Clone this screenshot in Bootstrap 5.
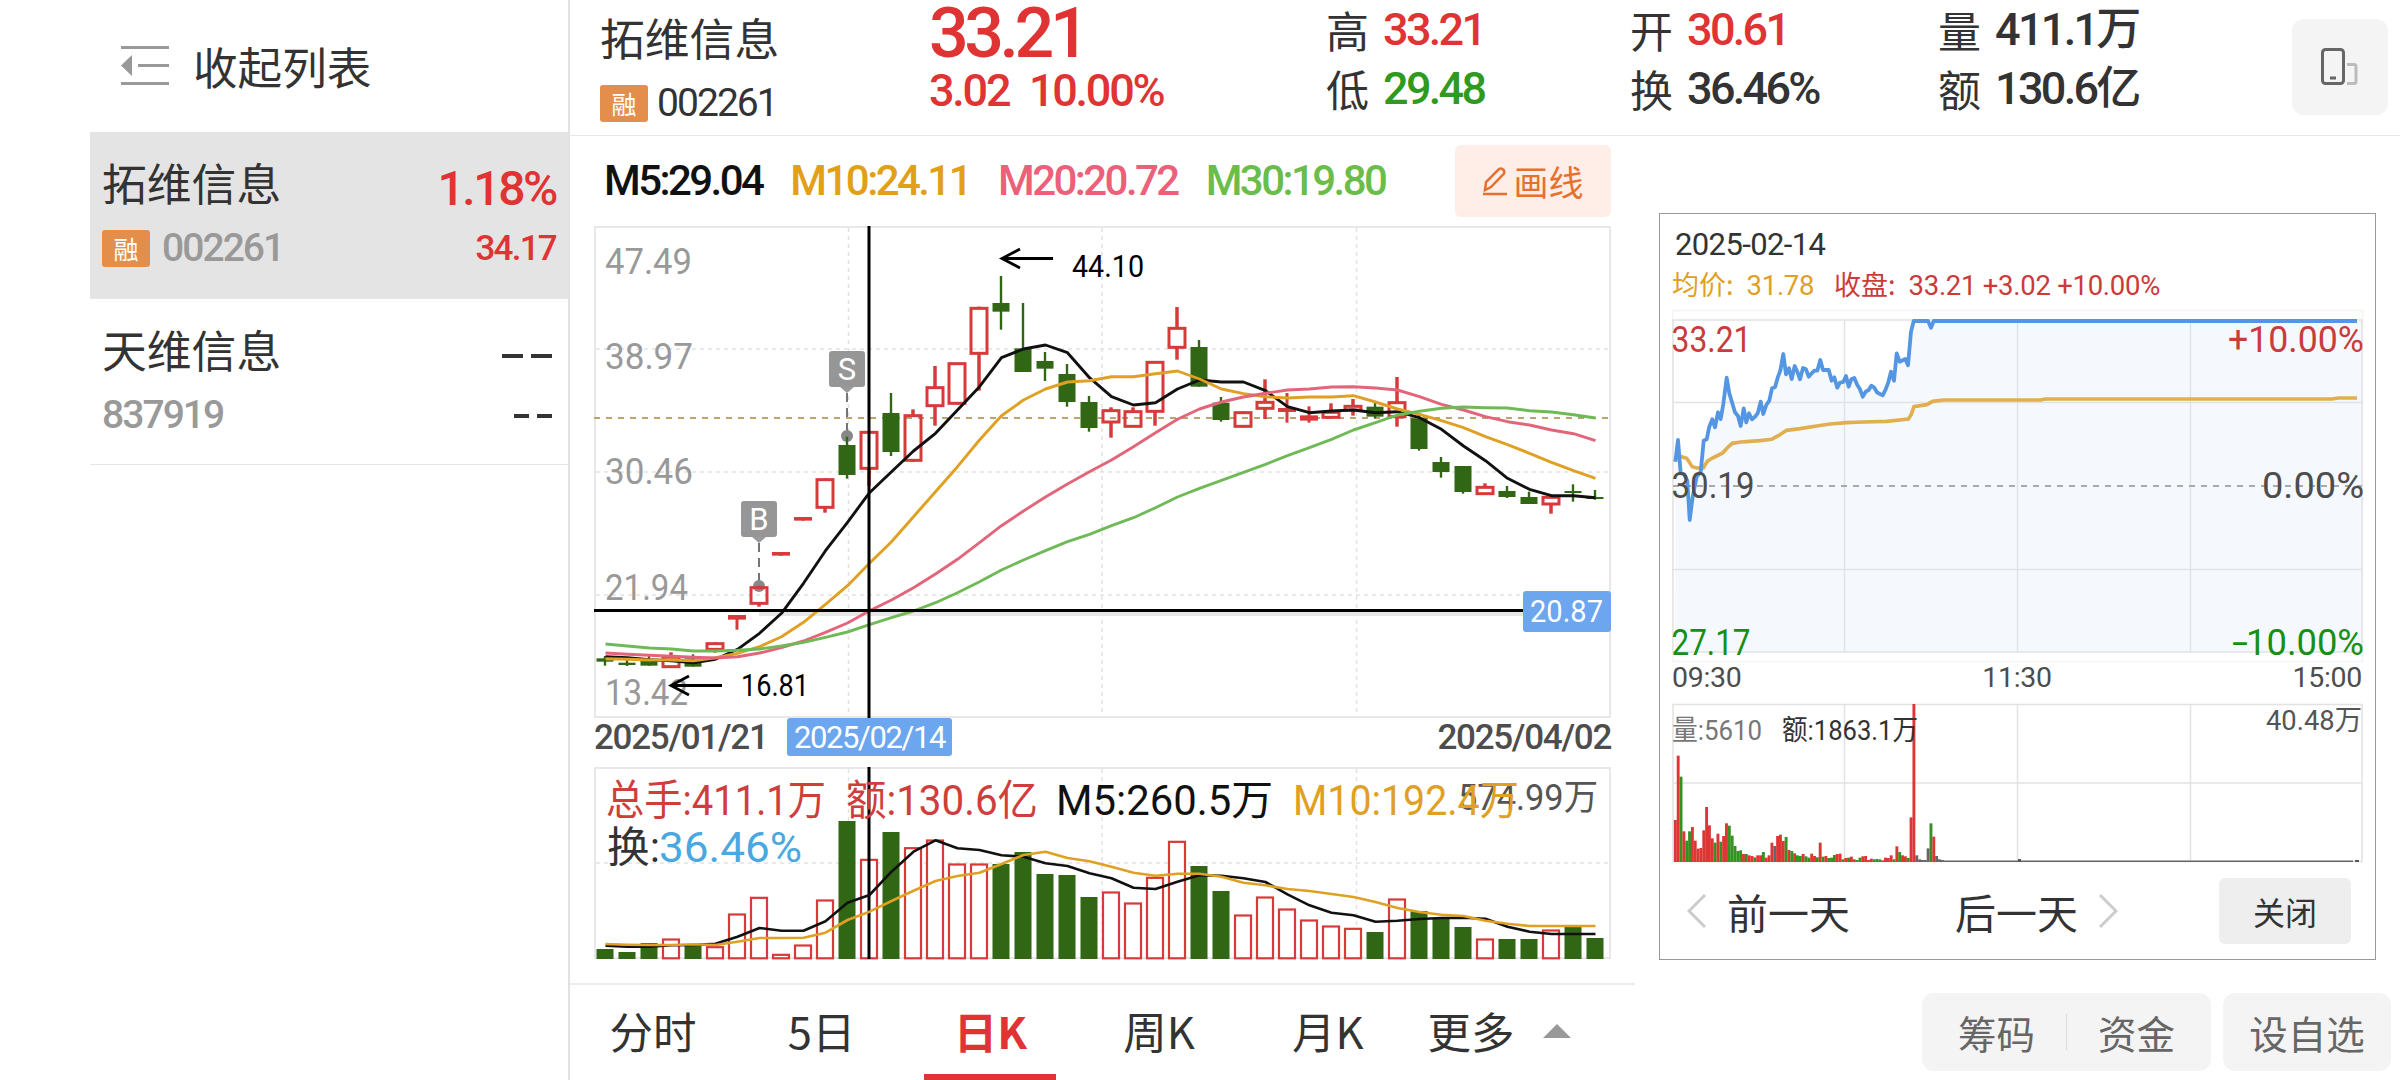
<!DOCTYPE html>
<html lang="zh-CN">
<head>
<meta charset="utf-8">
<meta name="viewport" content="width=device-width, initial-scale=1">
<title>拓维信息 002261</title>
<link href="https://cdn.jsdelivr.net/npm/bootstrap@5.3.0/dist/css/bootstrap.min.css" rel="stylesheet">
<script src="https://cdn.jsdelivr.net/npm/bootstrap@5.3.0/dist/js/bootstrap.bundle.min.js"></script>
<style>
  :root { --up:#e03333; --down:#2f9a1f; --ink:#333; --rule:#e6e6e6; }
  body { width:2400px; height:1080px; overflow:hidden; background:#fff; color:var(--ink);
         font-family:Roboto,"Noto Sans CJK SC",sans-serif; font-size:45px; line-height:1; }
  svg { display:block; flex-shrink:0; }
  .cjk { font-family:"Noto Sans CJK SC",sans-serif; }
  .din { font-weight:500; letter-spacing:-.05em; white-space:nowrap; }
  .up { color:var(--up); } .down { color:var(--down); } .dim { color:#999; }

  /* watch list */
  .watch { width:570px; padding-left:90px; border-right:2px solid #e2e2e2; }
  .watch-head { height:132px; padding-left:31px; gap:24px; }
  .watch-head .cjk { font-size:44.6px; }
  .stock { height:166px; padding:23px 12px 0 12px; border-bottom:1px solid var(--rule); }
  .stock.on { height:167px; background:#e4e4e4; }
  .stock-name { font-size:44.8px; line-height:54px; }
  .stock-code { font-size:39px; line-height:40px; margin-top:19px; gap:12px; }
  .stock-pct { font-size:48px; line-height:54px; padding-top:7px; }
  .stock-last { font-size:35px; line-height:40px; margin-top:13px; }
  .dash { display:block; background:#333; height:4px; }
  .rong { width:48px; height:37px; border-radius:3px; background:#e38f4b; color:#fff; font-size:25px; letter-spacing:0; line-height:36px; text-align:center; font-weight:400; }

  /* quote header */
  .quote { height:136px; border-bottom:1px solid #e8e8e8; padding-left:30px; }
  .quote .stock-code { gap:9px; }
  .q-name { width:329px; padding-top:10px; }
  .q-price { width:397px; padding-top:0; }
  .q-big { font-size:70px; line-height:66px; letter-spacing:-.064em; }
  .q-sub { font-size:45px; line-height:49px; word-spacing:.24em; }
  .q-stat { font-size:45px; letter-spacing:-.06em; }
  .q-row { display:flex; align-items:center; height:59px; line-height:59px; }
  .q-stat .cjk { font-size:43px; letter-spacing:0; font-weight:400; margin-right:14px; }
  .turn { width:96px; height:96px; margin:19px 12px 0 auto; background:#f4f4f4; border-radius:12px; }

  /* moving averages */
  .ma { height:90px; padding:0 0 0 34px; width:1041px; }
  .ma span { font-size:42px; letter-spacing:-.061em; font-weight:500; }
  .draw { width:156px; height:72px; border-radius:6px; background:#ffeee8; color:#e6702e; font-size:35px; }
  .plot { margin-left:16px; }
  .dates { height:49px; margin-left:24px; width:1017px; font-size:35px; color:#4d4d4d; position:relative; }
  .dates .din { letter-spacing:-.037em; line-height:40px; }
  .date-tag { position:absolute; left:193px; top:0; width:165px; height:38px; background:#6ba6ef; color:#fff; border-radius:3px; font-size:31px; line-height:40px; text-align:center; letter-spacing:-.045em; }

  /* period tabs */
  .periods { height:97px; margin-top:11px; border-top:2px solid #ececec; width:1065px; }
  .periods .tab { width:132px; height:95px; margin-right:36.7px; font-size:43.5px; line-height:92px; text-align:center; border-bottom:6px solid transparent; white-space:nowrap; }
  .periods .tab.on { color:var(--up); font-weight:700; border-color:var(--up); }
  .more { height:92px; margin-left:-3px; font-size:43.5px; gap:29px; }

  /* intraday pop-up */
  .side { width:765px; padding:77px 24px 0 24px; }
  .intraday { width:717px; height:747px; border:1px solid #999; border-radius:0; padding:13px 0 0 12px; }
  .i-date { font-size:31px; line-height:36px; padding-left:3px; letter-spacing:-.02em; }
  .i-line { font-size:27.5px; line-height:30px; margin-top:6px; letter-spacing:-.01em; height:40px; }
  .i-line .cjk { font-size:27px; letter-spacing:0; margin-right:13px; }
  .i-time { font-size:28.5px; line-height:38px; color:#4d4d4d; width:690px; height:44px; margin-top:-8px; letter-spacing:-.01em; }
  .i-nav { height:96px; font-size:41px; padding-left:15px; }
  .i-close { width:132px; height:66px; background:#eee; border-radius:6px; font-size:32px; color:var(--ink); }
  .pills { gap:12px; margin-top:33px; margin-right:-15px; }
  .pill { background:#f4f4f4; border-radius:12px; height:78px; font-size:38.5px; color:#666; }
</style>
</head>
<body class="d-flex">

<aside class="watch flex-shrink-0">
  <div class="watch-head d-flex align-items-center">
    <svg width="48" height="40" viewBox="0 0 48 40" fill="#999"><path d="M0 0h48v3H0zM17 18h31v3H17zM0 36h48v3H0zM0 19.500L11 9v21z"/></svg>
    <span class="cjk">收起列表</span>
  </div>
  <div class="stock on d-flex justify-content-between">
    <div>
      <div class="stock-name cjk">拓维信息</div>
      <div class="stock-code din dim d-flex align-items-center"><span class="rong cjk">融</span>002261</div>
    </div>
    <div class="text-end up">
      <div class="stock-pct din">1.18%</div>
      <div class="stock-last din">34.17</div>
    </div>
  </div>
  <div class="stock d-flex justify-content-between">
    <div>
      <div class="stock-name cjk">天维信息</div>
      <div class="stock-code din dim">837919</div>
    </div>
    <div class="d-flex flex-column align-items-end pt-4 pe-1">
      <div class="d-flex gap-2 mt-2"><i class="dash" style="width:21px"></i><i class="dash" style="width:21px"></i></div>
      <div class="d-flex gap-2 mt-5 pt-2"><i class="dash" style="width:15px"></i><i class="dash" style="width:15px"></i></div>
    </div>
  </div>
</aside>

<main class="flex-grow-1">
  <header class="quote d-flex">
    <div class="q-name">
      <div class="stock-name cjk">拓维信息</div>
      <div class="stock-code d-flex align-items-center din fw-normal"><span class="rong cjk">融</span>002261</div>
    </div>
    <div class="q-price up din">
      <div class="q-big">33.21</div>
      <div class="q-sub">3.02 10.00%</div>
    </div>
    <div class="q-stat din" style="width:304px">
      <div class="q-row"><span class="cjk">高</span><span class="up">33.21</span></div>
      <div class="q-row"><span class="cjk">低</span><span class="down">29.48</span></div>
    </div>
    <div class="q-stat din" style="width:308px">
      <div class="q-row"><span class="cjk">开</span><span class="up">30.61</span></div>
      <div class="q-row"><span class="cjk">换</span>36.46%</div>
    </div>
    <div class="q-stat din" style="width:199px">
      <div class="q-row justify-content-between"><span class="cjk">量</span>411.1万</div>
      <div class="q-row justify-content-between"><span class="cjk">额</span>130.6亿</div>
    </div>
    <div class="turn d-flex align-items-center justify-content-center">
      <svg width="38" height="38" viewBox="0 0 38 38" fill="none"><rect x="1.500" y="1.500" width="21" height="34" rx="3" stroke="#666" stroke-width="3"/><path d="M9 30h6" stroke="#666" stroke-width="3"/><path d="M26 16.500h7a2 2 0 0 1 2 2v15a2 2 0 0 1-2 2h-7" stroke="#bbb" stroke-width="3"/></svg>
    </div>
  </header>

  <div class="d-flex">
    <section>
      <div class="ma d-flex align-items-center justify-content-between">
        <div class="d-flex" style="gap:28px">
          <span style="color:#111">M5:29.04</span><span style="color:#e2a019">M10:24.11</span><span style="color:#ec6079">M20:20.72</span><span style="color:#6abd4a">M30:19.80</span>
        </div>
        <button class="draw btn border-0 p-0 d-flex align-items-center justify-content-center cjk">
          <svg class="me-1" width="27" height="30" viewBox="0 0 27 30" fill="none" stroke="#e6702e" stroke-width="2.500"><path d="M3 24l1-8L17 3q2-1 4 0.500t1 4L9 21zM1 28h24"/></svg>画线
        </button>
      </div>
      <svg class="plot" id="kline" width="1040" height="492" viewBox="586 226 1040 492"></svg>
      <div class="dates d-flex justify-content-between">
        <span class="din">2025/01/21</span><span class="din">2025/04/02</span>
        <span class="date-tag">2025/02/14</span>
      </div>
      <svg class="plot" id="volume" width="1040" height="205" viewBox="586 767 1040 205"></svg>
      <nav class="periods d-flex cjk">
        <div class="tab" style="margin-left:17px">分时</div>
        <div class="tab">5日</div>
        <div class="tab on">日K</div>
        <div class="tab">周K</div>
        <div class="tab">月K</div>
        <div class="more d-flex align-items-center">更多<svg width="28" height="14" viewBox="0 0 28 14"><path d="M14 0l14 14H0z" fill="#999"/></svg></div>
      </nav>
    </section>

    <section class="side">
      <div class="intraday card">
        <div class="i-date">2025-02-14</div>
        <div class="i-line d-flex">
          <span style="color:#dfa024;width:162px"><span class="cjk">均价:</span>31.78</span>
          <span style="color:#cc3a3a"><span class="cjk">收盘:</span>33.21 +3.02 +10.00%</span>
        </div>
        <svg id="minute" width="703" height="358" viewBox="1672 309 703 358"></svg>
        <div class="i-time d-flex justify-content-between"><span>09:30</span><span>11:30</span><span>15:00</span></div>
        <svg id="minvol" width="703" height="160" viewBox="1672 703 703 160"></svg>
        <div class="i-nav d-flex align-items-center cjk">
          <svg width="20" height="36" viewBox="0 0 20 36" fill="none" stroke="#ccc" stroke-width="3"><path d="M18 2L2 18l16 16"/></svg>
          <span style="margin-left:20px">前一天</span>
          <span style="margin-left:105px">后一天</span>
          <svg style="margin-left:20px" width="20" height="36" viewBox="0 0 20 36" fill="none" stroke="#ccc" stroke-width="3"><path d="M2 2l16 16L2 34"/></svg>
          <button class="i-close btn border-0 p-0 ms-auto cjk" style="margin-right:24px">关闭</button>
        </div>
      </div>
      <div class="pills d-flex justify-content-end cjk">
        <div class="pill d-flex align-items-center justify-content-center" style="width:289px;gap:31px"><span>筹码</span><i style="width:1px;height:36px;background:#ddd"></i><span>资金</span></div>
        <div class="pill d-flex align-items-center justify-content-center" style="width:168px">设自选</div>
      </div>
    </section>
  </div>
</main>

<script>
const RED = '#d63a3a', GREEN = '#306614';
const rect = (x, y, w, h, a) => `<rect x="${x}" y="${y}" width="${w}" height="${h}" ${a}/>`;
const seg = (x1, y1, x2, y2, a) => `<path d="M${x1} ${y1}L${x2} ${y2}" fill="none" ${a}/>`;
// text whose baseline is y, stretched to len
const txt = (s, x, y, size, len, fill, a = '') =>
  `<text x="${x}" y="${y}" font-size="${size}" textLength="${len}" lengthAdjust="spacingAndGlyphs" fill="${fill}" ${a}>${s}</text>`;
const X = i => 605 + 22 * i;
const line = (ys, top, c, w = 2.9) =>
  `<polyline fill="none" stroke="${c}" stroke-width="${w}" stroke-linejoin="round" points="${ys.map((v, i) => X(i) + .5 + ',' + (top + v / 3).toFixed(1)).join(' ')}"/>`;

/* daily candles: colour, high, body top, body bottom, low (thirds of a pixel below 210) */
const K = `g1338,1345,1355,1367 g1350,1358,1365,1368 g1333,1350,1367,1367 r1327,1342,1370,1370 g1333,1345,1370,1370 r1297,1301,1318,1328
r1215,1219,1225,1259 r1127,1133,1180,1190 r1026,1030,1033,1037 r921,925,928,932 r805,809,892,908 g680,705,795,806 r663,667,775,828 g549,609,726,738
r598,617,751,755 r468,533,587,647 r460,461,580,583 r290,295,430,542 g198,279,305,359 g279,415,486,486 g426,453,476,513 g462,492,576,590 g558,576,654,665
r592,602,636,683 r592,605,649,650 r455,457,604,647 r291,355,412,449 g390,411,530,530 g561,578,630,635 r604,608,649,653 r508,577,595,627 r549,598,602,638
r589,620,628,638 r580,607,622,625 r567,589,600,617 g578,590,620,625 r501,578,620,650 g612,625,717,722 g741,756,786,803 g768,768,846,851 r820,832,851,853
g828,843,861,864 g845,861,882,882 r858,862,882,911 g823,843,849,875 g840,861,866,869`.split(/\s+/).map(s => [s[0], ...s.slice(1).split(',').map(v => 210 + v / 3)]);
const M5 = [1340,1343,1349,1352,1358,1348,1318,1270,1210,1120,1022,937,848,785,723,670,600,530,443,417,405,428,503,560,585,578,537,510,516,516,542,590,608,603,600,608,605,623,658,708,752,805,838,857,857,863];
const M10 = [1346,1348,1350,1350,1352,1343,1330,1310,1280,1237,1183,1127,1060,995,920,845,770,690,617,570,537,516,512,500,500,491,483,507,537,551,560,564,561,561,557,576,597,613,632,653,680,704,730,757,782,805];
const M20 = [1329,1333,1336,1339,1342,1344,1340,1329,1313,1293,1267,1239,1202,1170,1133,1092,1048,998,947,903,861,822,785,750,710,668,628,597,576,561,550,540,537,531,530,534,540,560,583,600,620,635,645,660,671,692];
const M30 = [1302,1308,1314,1317,1323,1323,1321,1317,1308,1297,1282,1266,1244,1223,1203,1178,1148,1115,1080,1050,1022,995,973,947,923,893,861,835,811,787,763,737,713,688,660,638,615,604,595,591,593,594,602,606,614,624];

const GRID = 'stroke="#e2e2e2" stroke-width="1.500" stroke-dasharray="4 4"';
let s = rect(595, 227, 1015, 490, 'fill="none" stroke="#e8e8e8" stroke-width="2"');
for (const x of [848.5, 1102, 1356.5]) s += seg(x, 228, x, 717, GRID);
for (const y of [349, 472, 595]) s += seg(596, y, 1610, y, GRID);
s += seg(594, 418, 1610, 418, 'stroke="#b9a573" stroke-width="2" stroke-dasharray="6 6"');
for (const [t, y, w] of [['47.49', 274, 87], ['38.97', 369, 88], ['30.46', 484, 88], ['21.94', 600, 83], ['13.42', 705, 83]])
  s += txt(t, 605, y, 36, w, '#999');
const pin = (x, y, ch, dot) =>
  seg(x, y + 42, x, dot, 'stroke="#666" stroke-width="1.800" stroke-dasharray="9 6"') +
  `<circle cx="${x}" cy="${dot}" r="6" fill="#888"/>` +
  `<path d="M${x - 8} ${y + 35}h16l-8 7z" fill="#999"/>` + rect(x - 18, y, 36, 36, 'rx="3" fill="#969696"') +
  `<text x="${x}" y="${y + 29}" font-size="31" fill="#fff" text-anchor="middle">${ch}</text>`;
s += pin(847, 351, 'S', 436) + pin(759, 501, 'B', 586);
K.forEach(([c, h, t, b, l], i) => {
  const x = X(i), col = c === 'r' ? RED : GREEN;
  if (c === 'g') {
    s += seg(x, h, x, l, `stroke="${col}" stroke-width="2.400"`) + rect(x - 8.5, t, 17, Math.max(b - t, 2), `fill="${col}"`);
  } else if (b - t < 3) {
    s += seg(x, h, x, l, `stroke="${col}" stroke-width="3"`) + rect(x - 9, t - 1.3, 18, b - t + 2.6, `fill="${col}"`);
  } else {
    s += seg(x, h, x, t, `stroke="${col}" stroke-width="3.500"`) + seg(x, b, x, l, `stroke="${col}" stroke-width="3.500"`) +
         rect(x - 8, t, 16, b - t, `fill="none" stroke="${col}" stroke-width="3"`);
  }
});
s += rect(759, 611, 764, 5, 'fill="#e6e6e6"');
s += line(M5, 210, '#111') + line(M10, 210, '#dfa024') + line(M20, 210, '#e2657a') + line(M30, 210, '#70b957');
s += seg(869, 226, 869, 718, 'stroke="#000" stroke-width="3"') + seg(594, 610.5, 1523, 610.5, 'stroke="#000" stroke-width="3"');
const arrow = (x, y) => `<path d="M${x + 51} ${y}H${x}M${x + 18} ${y - 9.5}L${x} ${y}l18 9.500" fill="none" stroke="#000" stroke-width="2.800"/>`;
s += arrow(1002, 258.5) + txt('44.10', 1072, 277, 31, 72, '#000') + arrow(671, 685.5) + txt('16.81', 741, 696, 31, 68, '#000');
s += rect(1523, 591, 88, 41, 'rx="3" fill="#6ba6ef"') + txt('20.87', 1530, 622, 31, 73, '#fff');
kline.innerHTML = s;

/* daily volume */
const V = 'g747 g756 g729 r717 g735 r740 r642 r592 r763 r735 r600 g363 r478 g396 r443 r420 r492 r492 g492 g456 g522 g525 g591 r576 r609 r532 r424 g498 g573 r645 r591 r627 r660 r678 r685 g696 r597 g633 g655 g681 r717 g717 g717 r690 g681 g714'.split(' ');
const V5 = [737,740,740,736,735,731,710,684,692,692,664,608,585,515,455,421,445,450,466,470,490,498,520,535,563,567,545,526,527,535,546,583,616,638,646,665,662,657,654,653,656,680,695,702,702,702];
const V10 = [732,734,735,735,733,735,725,714,714,713,698,660,635,603,572,543,528,518,492,465,455,474,484,500,518,527,521,521,530,548,556,567,573,582,591,606,624,636,644,648,662,671,678,678,678,678];
s = rect(595, 768, 1015, 190, 'fill="none" stroke="#e8e8e8" stroke-width="2"');
for (const x of [848.5, 1102, 1356.5]) s += seg(x, 769, x, 958, GRID);
s += seg(596, 863, 1610, 863, GRID);
V.forEach((v, i) => {
  const y = 700 + v.slice(1) / 3, x = X(i);
  s += v[0] === 'g' ? rect(x - 8.5, y, 17, 959 - y, `fill="${GREEN}"`)
                    : rect(x - 8, y + .5, 16, 957.8 - y, `fill="#fff" stroke="${RED}" stroke-width="2.200"`);
});
s += txt('574.99万', 1458, 810, 36, 140, '#555');
s += seg(869, 767, 869, 959, 'stroke="#000" stroke-width="3"');
s += line(V5, 700, '#111', 2.6) + line(V10, 700, '#dfa024', 2.6);
s += txt('总手:411.1万', 606, 815, 42, 220, '#cf3d3d') + txt('额:130.6亿', 846, 815, 42, 192, '#cf3d3d') +
     txt('M5:260.5万', 1056, 815, 42, 217, '#111') + txt('M10:192.4万', 1293, 815, 42, 226, '#dfa024') +
     txt('换:', 607, 862, 42, 53, '#333') + txt('36.46%', 659, 862, 42, 143, '#4aa8e0');
volume.innerHTML = s;

/* intraday price, average and volume (thirds of a pixel from 1650,210 and 1650,690) */
const P = '76,755 84,690 92,790 102,793 112,812 119,930 128,860 140,800 152,785 161,692 170,688 178,650 187,628 195,652 204,607 212,627 220,582 230,503 238,550 247,580 255,607 264,618 272,648 281,595 289,637 297,610 306,628 315,620 323,610 332,575 340,612 349,585 358,572 366,535 375,532 383,503 391,482 400,432 408,493 417,475 425,507 434,468 442,485 450,508 459,474 468,478 476,500 485,490 493,482 502,482 511,450 519,480 536,480 545,512 553,502 562,533 570,518 580,516 588,498 596,530 604,508 613,504 622,525 630,538 638,560 647,545 656,540 664,527 672,532 681,547 690,552 698,556 707,538 715,517 723,485 732,512 740,430 749,455 766,447 774,466 783,365 791,333 834,333 843,353 851,333 2121,333';
const A = '84,740 93,740 110,745 127,770 140,774 160,774 172,754 186,745 200,738 218,729 232,713 247,700 272,696 300,694 330,692 365,688 385,677 410,661 450,656 500,648 540,642 590,638 640,636 710,634 775,627 783,615 792,590 830,584 848,574 880,570 1172,570 1185,567 2046,567 2064,564 2121,564';
const pts = d => d.split(' ').map(p => { const [x, y] = p.split(','); return (1650 + x / 3).toFixed(1) + ',' + (210 + y / 3).toFixed(1); }).join(' ');
const FR = 'stroke="#e2e2e2" stroke-width="1.500"';
s = rect(1672.5, 310.5, 690, 351, 'fill="none" stroke="#f3f3f3" stroke-width="1.500"');
s += `<polygon fill="#f5f9fe" points="1675,652 ${pts(P)} 2362,321 2362,652"/>`;
s += rect(1673, 320, 689, 332, `fill="none" ${FR}`);
for (const x of [1844.5, 2017.5, 2190.5]) s += seg(x, 320, x, 652, FR);
for (const y of [402.5, 569.5]) s += seg(1673, y, 2362, y, FR);
s += seg(1673, 486, 2362, 486, 'stroke="#aaa" stroke-width="2" stroke-dasharray="6 6"');
s += `<polyline fill="none" stroke="#e0af50" stroke-width="3.700" points="${pts(A)}"/><polyline fill="none" stroke="#5596e3" stroke-width="3.800" stroke-linejoin="round" points="${pts(P)}"/>`;
s += txt('33.21', 1671.5, 352, 36, 80, '#c83c3c') + txt('30.19', 1671.5, 498, 36, 83, '#4d4d4d') + txt('27.17', 1671.5, 655, 36, 79, '#159015');
s += txt('+10.00%', 2228, 352, 36, 136, '#c83c3c') + txt('0.00%', 2262, 498, 36, 102, '#4d4d4d');
s += txt('10.00%', 2246, 655, 36, 118, '#159015') + txt('-', 2232, 655, 36, 16, '#159015');
minute.innerHTML = s;

const MV = 'r390 r197 g260 r424 g452 g424 r411 r452 r476 r474 r421 r351 r406 r445 g458 r431 g455 r438 r400 g407 g437 g468 g483 g481 r492 g492 r496 r498 g502 r496 r496 g486 r503 r496 r458 k468 r438 r434 r453 g441 r480 g483 r490 g496 g498 r492 g499 g503 r491 r498 g502 r458 g500 r498 g504 g503 g495 r492 r491 g508 r504 g503 r500 r508 g510 g503 r499 r498 r510 r506 g508 g507 g508 r511 r503 r504 r496 g508 r469 g486 r496 r499 g504 r382 r42 k496 k508 k510 k510 k475 g400 r440 k498 k508 k510'.split(' ');
const MC = { r: '#de3535', g: '#369023', k: '#666' };
s = rect(1673, 704.5, 689, 157, `fill="none" ${FR}`) + seg(1673, 783, 2362, 783, FR);
for (const x of [1844.5, 2017.5, 2190.5]) s += seg(x, 705, x, 861, FR);
MV.forEach((v, i) => { const y = 690 + v.slice(1) / 3; s += rect((1673.9 + 2.84 * i).toFixed(2), y, 2.9, 862 - y, `fill="${MC[v[0]]}"`); });
s += seg(1940, 861.3, 2353, 861.3, 'stroke="#666" stroke-width="1.500"') + rect(2018, 859, 3, 3, 'fill="#555"') + rect(2355, 860, 4, 2, 'fill="#555"');
s += txt('量:5610', 1672, 740, 28, 90, '#777') + txt('额:1863.1万', 1782, 740, 28, 136, '#333') + txt('40.48万', 2266, 730, 28, 96, '#555');
minvol.innerHTML = s;
</script>
</body>
</html>
